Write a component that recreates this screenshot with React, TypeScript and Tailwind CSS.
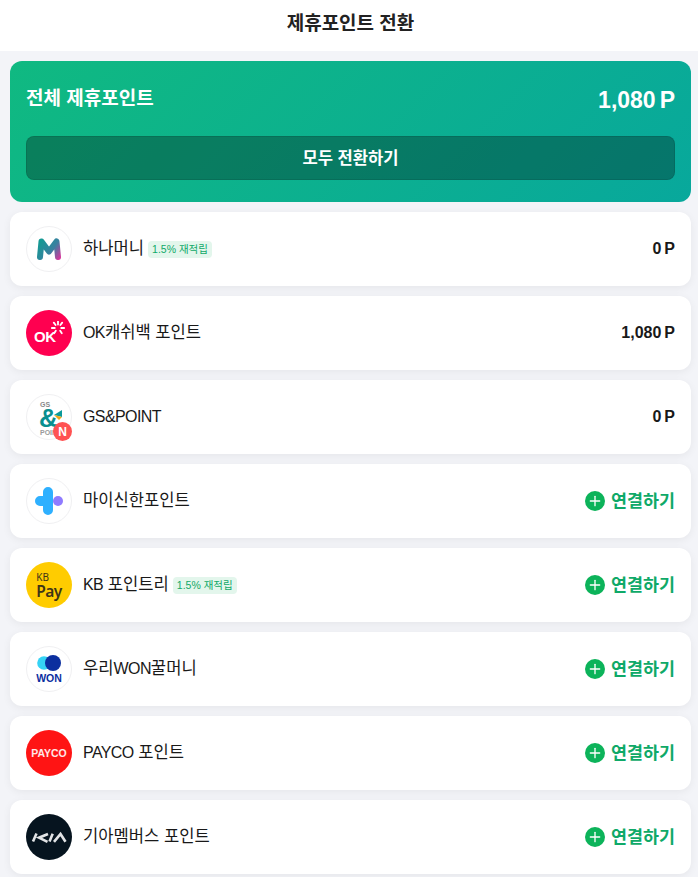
import { Plus } from "lucide-react";
import type { ReactNode } from "react";

const font = "font-['Liberation_Sans','Noto_Sans_CJK_KR',sans-serif]";

function Avatar({ className = "", children }: { className?: string; children?: ReactNode }) {
  return (
    <div className={`relative flex h-[46px] w-[46px] shrink-0 items-center justify-center rounded-full ${className}`}>
      {children}
    </div>
  );
}

function HanaLogo() {
  return (
    <Avatar className="border border-[#f0f0f2] bg-white">
      <svg width="28" height="28" viewBox="0 0 28 28">
        <defs>
          <linearGradient id="hana" gradientUnits="userSpaceOnUse" x1="3" y1="6" x2="26" y2="22">
            <stop offset="0" stopColor="#0f9c92" />
            <stop offset="0.6" stopColor="#3a80a0" />
            <stop offset="1" stopColor="#d8359c" />
          </linearGradient>
        </defs>
        <polyline points="5,22 6.5,6.5 14,16.5 21.5,6.5 23,22" fill="none" stroke="url(#hana)" strokeWidth="6" strokeLinecap="round" strokeLinejoin="round" />
      </svg>
    </Avatar>
  );
}

function OkLogo() {
  return (
    <Avatar className="bg-[#ff0050]">
      <span className="absolute left-[8px] top-[20px] text-[15px] font-bold leading-[14px] tracking-[-0.5px] text-white">OK</span>
      <svg className="absolute left-[25px] top-[11px]" width="14" height="14" viewBox="0 0 14 14">
        <path d="M7 0.5v3M2.8 1.6l1.8 2.4M11.2 1.6l-1.8 2.4M0.8 7h3M10.2 7h3M4.8 9.8l-1.6 2.4M9.2 9.8l1.6 2.4" stroke="#fff" strokeWidth="1.8" strokeLinecap="round" />
      </svg>
    </Avatar>
  );
}

function GsLogo() {
  return (
    <Avatar className="border border-[#f0f0f2] bg-white">
      <span className="absolute left-[13px] top-[6px] text-[7px] font-bold leading-[7px] text-[#8a8a8a]">GS</span>
      <span className="absolute left-[12px] top-[13px] text-[26px] font-bold leading-[20px] text-[#0a8f8f]">&amp;</span>
      <svg className="absolute left-[26px] top-[14px]" width="11" height="12" viewBox="0 0 11 12">
        <path d="M1 6L9 1v7z" fill="#0a9a9a" />
        <path d="M1 6l5 5 3-3z" fill="#f0a818" />
      </svg>
      <span className="absolute left-[13px] top-[34px] text-[7px] font-bold leading-[7px] text-[#9a9a9a]">POIN</span>
      <span className="absolute left-[26px] top-[27px] flex h-[19px] w-[19px] items-center justify-center rounded-full bg-[#ff5252] text-[12px] font-bold leading-none text-white">
        N
      </span>
    </Avatar>
  );
}

function ShinhanLogo() {
  return (
    <Avatar className="border border-[#f0f0f2] bg-white">
      <svg width="30" height="30" viewBox="0 0 30 30">
        <path d="M14 6v18M6 15h8" stroke="#2eb0ff" strokeWidth="10" strokeLinecap="round" />
        <circle cx="24" cy="15" r="5" fill="#8f7bff" />
      </svg>
    </Avatar>
  );
}

function KbLogo() {
  return (
    <Avatar className="bg-[#ffcc00]">
      <div className="flex flex-col items-start font-['Noto_Sans',sans-serif] text-[#3d3418]">
        <span className="text-[10px] leading-[10px]">KB</span>
        <span className="mt-[1px] text-[15.5px] font-semibold leading-[16px] tracking-[-0.5px]">Pay</span>
      </div>
    </Avatar>
  );
}

function WonLogo() {
  return (
    <Avatar className="border border-[#f0f0f2] bg-white">
      <div className="flex flex-col items-center">
        <svg width="26" height="16" viewBox="0 0 26 16">
          <circle cx="8" cy="8" r="6.8" fill="#35d3f5" />
          <circle cx="17" cy="8" r="8" fill="#0b2f9f" />
        </svg>
        <span className="mt-[2px] text-[10.5px] font-bold leading-[10px] text-[#0b2f9f]">WON</span>
      </div>
    </Avatar>
  );
}

function PaycoLogo() {
  return (
    <Avatar className="bg-[#ff1414]">
      <span className="text-[10.5px] font-bold leading-none text-white/90">PAYCO</span>
    </Avatar>
  );
}

function KiaLogo() {
  return (
    <Avatar className="bg-[#06141f]">
      <svg className="absolute left-0 top-0" width="46" height="46" viewBox="0 0 46 46">
        <path d="M7 27.5L10.5 19.5M22 20l-9 3.7L21.5 27.8M23.5 27.5l3.2-7.8M28 27.8L34.5 20l5 7.8" fill="none" stroke="#e2e4e6" strokeWidth="2.6" />
      </svg>
    </Avatar>
  );
}

// latin runs are set tighter than the hangul around them
function Name({ text }: { text: string }) {
  return (
    <span className="text-[16.6px] text-[#191919]">
      {text.split(/([A-Za-z&]+)/).map((part, i) =>
        /[A-Za-z&]/.test(part) ? (
          <span key={i} className="text-[16px] tracking-[-0.6px]">
            {part}
          </span>
        ) : (
          part
        ),
      )}
    </span>
  );
}

type Item = { name: string; logo: ReactNode; badge?: boolean; points?: string };

const items: Item[] = [
  { name: "하나머니", logo: <HanaLogo />, badge: true, points: "0" },
  { name: "OK캐쉬백 포인트", logo: <OkLogo />, points: "1,080" },
  { name: "GS&POINT", logo: <GsLogo />, points: "0" },
  { name: "마이신한포인트", logo: <ShinhanLogo /> },
  { name: "KB 포인트리", logo: <KbLogo />, badge: true },
  { name: "우리WON꿀머니", logo: <WonLogo /> },
  { name: "PAYCO 포인트", logo: <PaycoLogo /> },
  { name: "기아멤버스 포인트", logo: <KiaLogo /> },
];

function Row({ item }: { item: Item }) {
  return (
    <div className="flex h-[74px] items-center rounded-[12px] bg-white px-4 shadow-[0_2px_8px_rgba(0,0,0,0.06)]">
      {item.logo}
      <div className="ml-[11px] flex items-center">
        <Name text={item.name} />
        {item.badge && (
          <span className="ml-[4px] mt-[1px] flex h-[17px] items-center rounded-[4px] bg-[#e3f6ec] px-[4px] text-[10.5px] text-[#0fa968]">
            1.5% 재적립
          </span>
        )}
      </div>
      <div className="ml-auto">
        {item.points ? (
          <span className="text-[16px] font-bold text-[#191919]">
            {item.points}
            <span className="ml-[3px]">P</span>
          </span>
        ) : (
          <span className="flex items-center gap-[6px] text-[17.4px] font-bold text-[#0fa968]">
            <span className="flex h-[20px] w-[20px] items-center justify-center rounded-full bg-[#0cb35a]">
              <Plus size={16} color="#fff" strokeWidth={2} />
            </span>
            연결하기
          </span>
        )}
      </div>
    </div>
  );
}

export default function App() {
  return (
    <div className={`h-[877px] overflow-hidden bg-[#f3f4f8] ${font}`}>
      <header className="flex h-[51px] items-center justify-center bg-white pb-[3px] pl-[3px] text-[19px] font-bold text-[#222]">
        제휴포인트 전환
      </header>
      <main className="flex flex-col gap-[10px] pl-[10px] pr-[7px] pt-[10px]">
        <section className="rounded-[12px] bg-[linear-gradient(135deg,#10b981,#08a89c)] px-4 pb-[22px] pt-[23px]">
          <div className="flex items-start justify-between">
            <span className="mt-[1px] text-[19px] font-bold leading-[28px] text-white">전체 제휴포인트</span>
            <span className="text-[23px] font-bold leading-[32px] text-white">
              1,080<span className="ml-[4px]">P</span>
            </span>
          </div>
          <button className="mt-[20px] flex h-[44px] w-full items-center justify-center rounded-[8px] border border-black/10 bg-black/30 pt-[2px] text-[16.6px] font-bold text-white">
            모두 전환하기
          </button>
        </section>
        {items.map((item) => (
          <Row key={item.name} item={item} />
        ))}
      </main>
    </div>
  );
}
